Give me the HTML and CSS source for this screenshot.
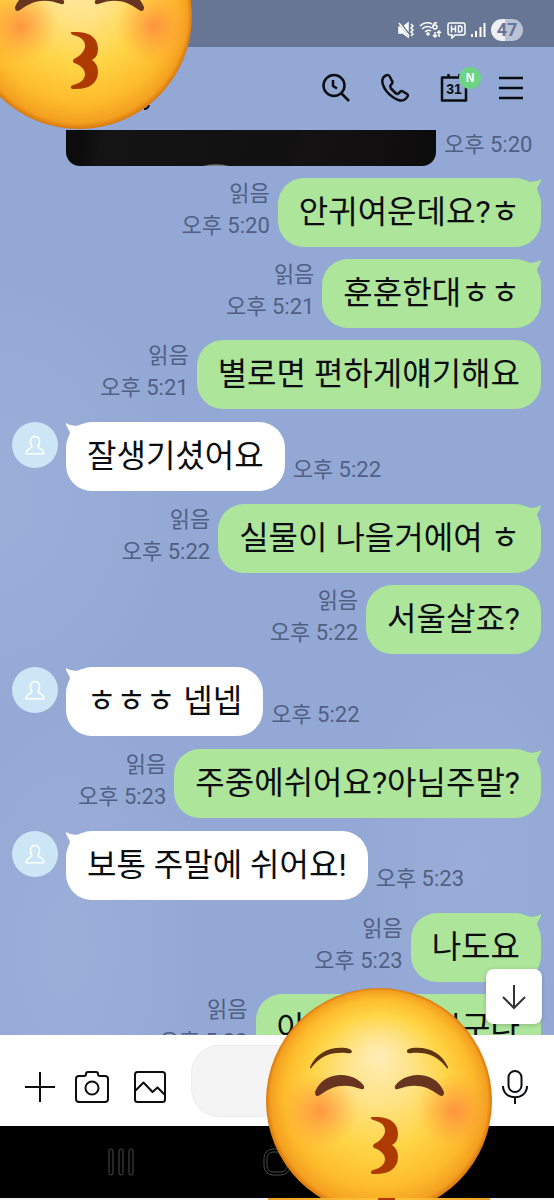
FILE: index.html
```html
<!DOCTYPE html>
<html lang="ko">
  <head>
    <meta charset="UTF-8" />
    <meta name="viewport" content="width=device-width, initial-scale=1.0" />
    <title>채팅</title>
    <link rel="stylesheet" href="styles.css">
  </head>
  <body>
    <!-- Shared shapes -->
    <svg class="defs" width="0" height="0" aria-hidden="true">
      <defs>
        <radialGradient id="face" gradientUnits="userSpaceOnUse" cx="113" cy="113" r="113" fx="113" fy="66">
          <stop offset="0" stop-color="#ffedb8" />
          <stop offset="0.3" stop-color="#ffe387" />
          <stop offset="0.6" stop-color="#ffd545" />
          <stop offset="0.84" stop-color="#fdbb2c" />
          <stop offset="0.96" stop-color="#f4a020" />
          <stop offset="1" stop-color="#d9780f" />
        </radialGradient>
        <radialGradient id="cheek">
          <stop offset="0" stop-color="#ff8540" stop-opacity="0.8" />
          <stop offset="0.45" stop-color="#ff903f" stop-opacity="0.45" />
          <stop offset="1" stop-color="#ffa03c" stop-opacity="0" />
        </radialGradient>
        <symbol id="kiss" viewBox="0 0 226 226">
          <circle cx="113" cy="113" r="113" fill="url(#face)" />
          <circle cx="54" cy="123" r="38" fill="url(#cheek)" />
          <circle cx="188" cy="123" r="38" fill="url(#cheek)" />
          <path fill="#5f3511" d="M44 79C50 65 64 58 80 60Q86 61 86 64Q85 66 80 65C65 64 55 68 46 79Q44 82 44 79ZM182 79C176 65 162 58 146 60Q140 61 141 64Q142 66 146 65C161 64 171 68 180 79Q182 82 182 79Z" />
          <path fill="#67341f" d="M49 104C54 92 64 87 75 87C86 87 94 92 98 98Q99 102 95 101C79 95 67 97 54 107Q49 110 49 104ZM178 104C173 92 163 87 152 87C141 87 133 92 129 98Q128 102 132 101C148 95 160 97 173 107Q178 110 178 104Z" />
          <path fill="#ad3a00" d="M106 129C121 128 132 133 132 146Q132 154 126 157Q132 161 132 169C132 181 122 187 106 186Q103 184 107 182C115 180 119 176 119 171C119 166 114 162 108 160Q106 158 108 156C114 153 119 148 119 143C119 137 115 134 107 132Q103 130 106 129Z" />
        </symbol>
        <symbol id="person" viewBox="0 0 20 20">
          <path d="M7 11.500C5.500 9 5 6 6 4C7.300.7 12.700.7 14 4C15 6 14.500 9 13 11.500C13.500 13.500 19 14 19 18.800H1C1 14 6.500 13.500 7 11.500Z" />
        </symbol>
        <symbol id="tail" viewBox="0 0 16 16">
          <path d="M0 2C5 5 11 4 16 1C16 5 13 7 12 11L13 14L4 10Z" />
        </symbol>
      </defs>
    </svg>

    <!-- Phone status bar -->
    <div class="status-bar">
      <svg class="status-mute" width="16" height="18" viewBox="0 0 16 18">
        <path fill="#fff" d="M1 6H5L10 2V16L5 12H1Z" />
        <path d="M1 1L11 14" stroke="#667694" stroke-width="3" />
        <path d="M1 2L11 15M13 3L15 5L13 7L15 9L13 11L15 13L13 15" />
      </svg>
      <svg class="status-wifi" width="23" height="18" viewBox="0 0 23 18">
        <path d="M1 5C5 1 10 1 13 3M3 8C6 5 10 5 13 7M6 11Q9 8 12 10M18 2C15 1 14 4 14 6M16 11V16M14 14L16 16L18 14M20 16V10M18 12L20 10L22 12" />
        <circle cx="16" cy="6" r="2" />
        <circle cx="9" cy="13" r="1" fill="#fff" />
      </svg>
      <svg class="status-hd" width="19" height="18" viewBox="0 0 19 18">
        <path d="M3 2H16Q18 2 18 4V12Q18 14 16 14H8L5 17V14H3Q1 14 1 12V4Q1 2 3 2ZM4.500 4.500V11.500M8.500 4.500V11.500M4.500 8H8.500M11.500 5V11H13Q15 11 15 9V7Q15 5 13 5Z" />
      </svg>
      <svg class="status-signal" width="15" height="18" viewBox="0 0 15 18">
        <path stroke-width="2" d="M1 16V13M5 16V10M9.500 16V6M13.500 16V2" />
      </svg>
      <span class="battery">47</span>
    </div>

    <!-- Chat header -->
    <header class="header">
      <svg class="title-mark" width="6" height="6" viewBox="0 0 6 6"><path d="M0 5Q4 5 5 1" /></svg>
      <button class="icon-btn" aria-label="검색">
        <svg width="28" height="30" viewBox="0 0 28 30">
          <circle cx="12" cy="12.500" r="10.500" />
          <path d="M19.500 20.500L27 28M11 7V13L15 15.500" />
        </svg>
      </button>
      <button class="icon-btn" aria-label="통화">
        <svg width="28" height="30" viewBox="0 0 28 30">
          <path d="M2 5Q4 2 7 2Q8 2 9 4L11 8Q12 9 11 10.500L9.500 12.500Q9 14 10 15.500L15 20.500Q16.500 21.500 18 20L19.500 18.500Q20.500 17.500 22 18.500L26 21Q27.500 22 26.500 23.500Q24 28 19 27.500C12 26 3 18 1.500 10Q1 7 2 5Z" />
        </svg>
      </button>
      <button class="icon-btn calendar" aria-label="캘린더">
        <svg width="28" height="30" viewBox="0 0 28 30">
          <path d="M2 4.500H26V27.500H2ZM8.500 1V5M19.500 1V5" />
          <text x="14" y="21">31</text>
        </svg>
        <span class="badge">N</span>
      </button>
      <button class="icon-btn" aria-label="메뉴">
        <svg width="24" height="30" viewBox="0 0 24 30">
          <path d="M0 5H24M0 15H24M0 25H24" />
        </svg>
      </button>
    </header>

    <!-- Messages -->
    <main class="chat">
      <div class="row photo-row">
        <div class="photo"></div>
        <div class="meta">오후 5:20</div>
      </div>
      <div class="row sent">
        <div class="meta">읽음<br>오후 5:20</div>
        <div class="bubble">안귀여운데요?ㅎ<svg class="tail"><use href="#tail" /></svg></div>
      </div>
      <div class="row sent">
        <div class="meta">읽음<br>오후 5:21</div>
        <div class="bubble">훈훈한대ㅎㅎ<svg class="tail"><use href="#tail" /></svg></div>
      </div>
      <div class="row sent">
        <div class="meta">읽음<br>오후 5:21</div>
        <div class="bubble">별로면 편하게얘기해요</div>
      </div>
      <div class="row received">
        <div class="avatar"><svg width="20" height="20"><use href="#person" /></svg></div>
        <div class="bubble">잘생기셨어요<svg class="tail"><use href="#tail" /></svg></div>
        <div class="meta">오후 5:22</div>
      </div>
      <div class="row sent">
        <div class="meta">읽음<br>오후 5:22</div>
        <div class="bubble">실물이 나을거에여 ㅎ<svg class="tail"><use href="#tail" /></svg></div>
      </div>
      <div class="row sent">
        <div class="meta">읽음<br>오후 5:22</div>
        <div class="bubble">서울살죠?</div>
      </div>
      <div class="row received">
        <div class="avatar"><svg width="20" height="20"><use href="#person" /></svg></div>
        <div class="bubble">ㅎㅎㅎ 넵넵<svg class="tail"><use href="#tail" /></svg></div>
        <div class="meta">오후 5:22</div>
      </div>
      <div class="row sent">
        <div class="meta">읽음<br>오후 5:23</div>
        <div class="bubble">주중에쉬어요?아님주말?<svg class="tail"><use href="#tail" /></svg></div>
      </div>
      <div class="row received">
        <div class="avatar"><svg width="20" height="20"><use href="#person" /></svg></div>
        <div class="bubble">보통 주말에 쉬어요!<svg class="tail"><use href="#tail" /></svg></div>
        <div class="meta">오후 5:23</div>
      </div>
      <div class="row sent">
        <div class="meta">읽음<br>오후 5:23</div>
        <div class="bubble">나도요<svg class="tail"><use href="#tail" /></svg></div>
      </div>
      <div class="row sent">
        <div class="meta">읽음<br>오후 5:23</div>
        <div class="bubble">아 주말에쉬시구나</div>
      </div>
      <button class="scroll-down" aria-label="맨 아래로">
        <svg width="24" height="26" viewBox="0 0 24 26"><path d="M12 1V24M1 13L12 24L23 13" /></svg>
      </button>
    </main>

    <!-- Message input -->
    <div class="input-bar">
      <button class="icon-btn plus" aria-label="추가">
        <svg width="30" height="34" viewBox="0 0 30 34"><path d="M0 17H30M15 2V32" /></svg>
      </button>
      <button class="icon-btn camera" aria-label="카메라">
        <svg width="34" height="34" viewBox="0 0 34 34">
          <path d="M4 6H9Q11 6 11 4Q11 2 13 2H21Q23 2 23 4Q23 6 25 6H30Q33 6 33 9V29Q33 32 30 32H4Q1 32 1 29V9Q1 6 4 6Z" />
          <circle cx="17" cy="18" r="6.500" />
        </svg>
      </button>
      <button class="icon-btn gallery" aria-label="사진">
        <svg width="32" height="34" viewBox="0 0 32 34">
          <rect x="1" y="2" width="30" height="30" rx="2.500" />
          <path d="M1 21L9.500 12.500L18.500 22L23.500 17.500L31 25" />
        </svg>
      </button>
      <input class="message-input" type="text" aria-label="메시지 입력" />
      <button class="icon-btn" aria-label="음성">
        <svg width="26" height="34" viewBox="0 0 26 34">
          <rect x="6.500" y="1" width="13" height="21" rx="6.500" />
          <path d="M1 16C1 31 25 31 25 16M13 27V34" />
        </svg>
      </button>
    </div>

    <!-- Phone navigation -->
    <nav class="nav-bar">
      <button class="nav-btn" aria-label="최근 앱">
        <svg width="26" height="28" viewBox="0 0 26 28">
          <rect x="1" y="1" width="4" height="26" rx="2" />
          <rect x="11" y="1" width="4" height="26" rx="2" />
          <rect x="21" y="1" width="4" height="26" rx="2" />
        </svg>
      </button>
      <button class="nav-btn" aria-label="홈">
        <svg width="28" height="28" viewBox="0 0 28 28">
          <rect x="1" y="1" width="26" height="26" rx="9" />
          <rect x="4" y="4" width="20" height="20" rx="6" />
        </svg>
      </button>
      <span class="nav-space"></span>
    </nav>
    <div class="edge"></div>

    <!-- Stickers on top of everything -->
    <svg class="sticker sticker-top"><use href="#kiss" width="226" height="226" /></svg>
    <svg class="sticker sticker-bottom"><use href="#kiss" width="226" height="226" /></svg>
  </body>
</html>
```

FILE: styles.css
```css
* {
  margin: 0;
  padding: 0;
  box-sizing: border-box;
}

body {
  position: relative;
  display: flex;
  flex-direction: column;
  height: 100vh;
  overflow: hidden;
  font-family: Roboto, "Noto Sans CJK KR", sans-serif;
  color: #0b0d10;
  background-color: #93a8d4;
  background-image: radial-gradient(ellipse at 0% 42%, #9cafd9 0, transparent 24%),
    radial-gradient(ellipse at 12% 79%, #9cafd9 0, transparent 20%),
    radial-gradient(ellipse at 85% 72%, #9aadd8 0, transparent 18%);
}

button {
  border: none;
  background: none;
  cursor: pointer;
}

svg {
  display: block;
  fill: none;
}

.defs {
  position: absolute;
}

/* Status bar */
.status-bar {
  display: flex;
  flex: none;
  justify-content: flex-end;
  align-items: center;
  gap: 5px;
  height: 47px;
  padding: 12px 31px 0 0;
  background-color: #667694;
}

.status-bar svg {
  stroke: #fff;
  stroke-width: 1.500;
}

.battery {
  width: 32px;
  height: 22px;
  border-radius: 11px;
  background: linear-gradient(90deg, #eceff5 45%, #bac3d6 45%);
  color: #667694;
  font-size: 18px;
  font-weight: 700;
  line-height: 22px;
  text-align: center;
}

/* Header */
.header {
  display: flex;
  flex: none;
  justify-content: flex-end;
  align-items: center;
  gap: 31px;
  height: 82px;
  padding-right: 31px;
}

.icon-btn svg {
  stroke: #0b0d10;
  stroke-width: 2.500;
  stroke-linejoin: round;
}

.title-mark {
  position: absolute;
  left: 144px;
  top: 104px;
  stroke: #0b0d10;
  stroke-width: 2;
}

.calendar {
  position: relative;
}

.calendar text {
  fill: #0b0d10;
  stroke: none;
  font-family: "Liberation Sans", sans-serif;
  font-size: 14px;
  font-weight: 700;
  text-anchor: middle;
}

.badge {
  position: absolute;
  top: -6px;
  right: -13px;
  width: 22px;
  height: 22px;
  border-radius: 50%;
  background-color: #6bd584;
  color: #fff;
  font-size: 12px;
  font-weight: 700;
  line-height: 22px;
  text-align: center;
}

/* Chat */
.chat {
  position: relative;
  display: flex;
  flex: 1;
  flex-direction: column;
  gap: 12px;
  min-height: 0;
  padding: 0 13px 0 12px;
  overflow: hidden;
}

.row {
  display: flex;
  flex: none;
  align-items: flex-end;
  gap: 8px;
}

.sent {
  justify-content: flex-end;
}

.received {
  margin: 1px 0;
}

.photo-row {
  padding-left: 54px;
}

.photo {
  width: 370px;
  height: 36px;
  border-radius: 0 0 14px 14px;
  background: radial-gradient(ellipse 14px 2px at 150px 36px, #777b73 60%, transparent 100%),
    linear-gradient(100deg, #0c0c0d 5%, #151415 10%, #111 60%, #151213 64%, #0d0c0d);
}

.meta {
  padding-bottom: 5px;
  color: #506083;
  font-size: 22px;
  line-height: 32px;
  text-align: right;
  white-space: nowrap;
}

.bubble {
  position: relative;
  height: 69px;
  padding: 0 21px;
  border-radius: 26px;
  background-color: #ade59a;
  font-size: 32px;
  line-height: 68px;
  white-space: nowrap;
}

.received .bubble {
  background-color: #fff;
}

.tail {
  position: absolute;
  top: 0;
  right: 0;
  width: 16px;
  height: 16px;
  fill: #ade59a;
}

.received .tail {
  right: auto;
  left: 0;
  fill: #fff;
  transform: scaleX(-1);
}

.avatar {
  display: flex;
  align-self: flex-start;
  justify-content: center;
  align-items: center;
  width: 46px;
  height: 46px;
  border-radius: 50%;
  background-color: #cde6f6;
}

.avatar svg {
  stroke: #fff;
  stroke-width: 1.500;
}

.scroll-down {
  position: absolute;
  right: 12px;
  bottom: 11px;
  display: flex;
  justify-content: center;
  align-items: center;
  width: 56px;
  height: 55px;
  border-radius: 8px;
  background-color: #fff;
  box-shadow: 0 1px 4px rgba(0, 0, 0, 0.2);
}

.scroll-down svg {
  stroke: #333;
  stroke-width: 2;
}

/* Input bar */
.input-bar {
  display: flex;
  flex: none;
  align-items: center;
  gap: 25px;
  height: 91px;
  padding: 10px 26px 9px 25px;
  background-color: #fff;
}

.input-bar .icon-btn {
  padding-top: 11px;
}

.input-bar .icon-btn svg {
  stroke-width: 2;
}

.plus {
  margin-right: -5px;
}

.message-input {
  flex: 1;
  min-width: 0;
  height: 72px;
  padding: 0 20px;
  border: 1px solid #ececec;
  border-radius: 28px;
  background-color: #f4f4f4;
  font-size: 22px;
}

/* Navigation */
.nav-bar {
  display: flex;
  flex: none;
  justify-content: space-between;
  align-items: center;
  height: 72px;
  padding: 0 108px;
  background-color: #000;
}

.nav-btn svg {
  stroke: #4a4a4a;
  stroke-width: 1;
}

.nav-space {
  width: 26px;
}

/* Thin strip below the navigation, with the cut top of another sticker */
.edge {
  flex: none;
  height: 2px;
  background: linear-gradient(90deg, transparent 268px, #f1a02a 268px, #ffc235 378px, #ad3a00 378px, #ad3a00 395px, #ffc235 395px, #f1a02a 490px, transparent 490px) #f3f3f3;
}

/* Stickers */
.sticker {
  position: absolute;
  width: 226px;
  height: 226px;
  pointer-events: none;
}

.sticker-top {
  top: -97px;
  left: -34px;
}

.sticker-bottom {
  bottom: 2px;
  left: 266px;
  height: 210px;
}
```
